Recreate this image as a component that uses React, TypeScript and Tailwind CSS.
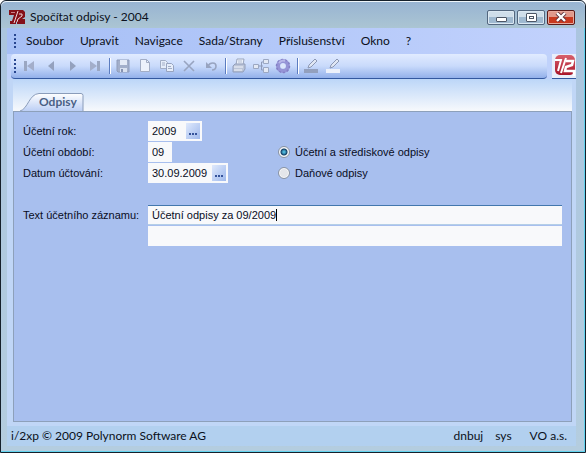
import type { ReactNode } from "react";

const menu = ["Soubor", "Upravit", "Navigace", "Sada/Strany", "Příslušenství", "Okno", "?"];

const toolGroups: { label: string; icon: ReactNode }[][] = [
  [
    { label: "První", icon: <><path d="M3 3h3v10H3z" fill="#9ba7c2" /><path d="M13 3v10L6 8z" fill="#a3aeca" /></> },
    { label: "Předchozí", icon: <path d="M11 3v10L5 8z" fill="#94a1be" /> },
    { label: "Další", icon: <path d="M5 3v10l6-5z" fill="#94a1be" /> },
    { label: "Poslední", icon: <><path d="M10 3h3v10h-3z" fill="#9ba7c2" /><path d="M3 3v10l7-5z" fill="#a3aeca" /></> },
  ],
  [
    {
      label: "Uložit",
      icon: (
        <>
          <path d="M2 2h12v12H3l-1-1z" fill="#a3afca" stroke="#8f9cba" />
          <path d="M5 2h7v5H5z" fill="#e4eaf6" />
          <path d="M5 10h7v4H5z" fill="#d9e1f0" />
          <path d="M6 11h2v3H6z" fill="#8592b2" />
        </>
      ),
    },
    { label: "Nový", icon: <><path d="M3.5 1.5h6l3 3v9h-9z" fill="#edf2fc" stroke="#a2adc5" /><path d="M9.5 1.5v3h3" fill="none" stroke="#a2adc5" /></> },
    {
      label: "Kopírovat",
      icon: (
        <>
          <path d="M1.500 2.500h5l2 2v6h-7z" fill="#e6edfa" stroke="#a2adc5" />
          <path d="M7.500 5.500h5l2 2v6h-7z" fill="#e6edfa" stroke="#97a3bf" />
          <path d="M3 5h3M3 7h3M9 8.500h3M9 10.500h4" stroke="#a2adc5" />
        </>
      ),
    },
    { label: "Smazat", icon: <path d="M3 3l10 10M13 3L3 13" stroke="#98a4c0" strokeWidth="1.600" /> },
    { label: "Zpět", icon: <><path d="M5 8c2-4 8-4 8 0 0 3-2 4-4 4" fill="none" stroke="#98a4c0" strokeWidth="1.600" /><path d="M3 4v6h6z" fill="#98a4c0" /></> },
  ],
  [
    {
      label: "Tisk",
      icon: (
        <>
          <path d="M5 7l1-6h7l-1 6z" fill="#edf2fb" stroke="#9ba6bd" />
          <path d="M2 8l2-2h10v5l-2 3H2z" fill="#bcc5d8" stroke="#929eb9" />
          <path d="M3 9h9M3 12h8" stroke="#f2f5fb" />
          <path d="M7 3h4M7 5h4" stroke="#b3bdd1" />
        </>
      ),
    },
    {
      label: "Struktura",
      icon: (
        <>
          <path d="M6 8h4M8.500 4v8M8.500 4H10M8.500 12H10" fill="none" stroke="#8f9bb9" />
          <path d="M.5 6.500h5v4h-5zM10.500 1.500h5v4h-5zM10.500 9.500h5v5h-5z" fill="#e3e9f5" stroke="#9ca8c2" />
        </>
      ),
    },
    {
      label: "Nastavení",
      icon: (
        <>
          <circle cx="8" cy="8" r="5" fill="none" stroke="#9694d6" strokeWidth="4" />
          <circle cx="8" cy="8" r="6.500" fill="none" stroke="#8481c6" strokeWidth="1.500" strokeDasharray="2 2" />
          <path d="M4 5c1-2 4-3 6-2" fill="none" stroke="#b9b8e9" strokeWidth="2" />
          <circle cx="8" cy="8" r="2.500" fill="#dde6fb" />
        </>
      ),
    },
  ],
  [
    { label: "Barva pera", icon: <><path d="M1 11h14v4H1z" fill="#93a0bd" /><path d="M5 10l1-3 6-6 2 2-6 6z" fill="#e0e7f4" stroke="#8c98b4" /></> },
    { label: "Zvýraznění", icon: <><path d="M1 11h14v4H1z" fill="#edf1fa" /><path d="M5 10l1-3 6-6 2 2-6 6z" fill="#e0e7f4" stroke="#8c98b4" /></> },
  ],
];

function Grip() {
  return (
    <span className="flex flex-col gap-[2px]">
      {[0, 1, 2, 3].map((i) => (
        <span key={i} className="size-[2px] bg-[#27458f]" />
      ))}
    </span>
  );
}

function TitleLogo() {
  return (
    <svg viewBox="0 0 16 16" className="size-4 shrink-0" aria-hidden="true">
      <path d="M0 1h14l2 2v5l-3 2h3v5H8v-2H7v2H1v-3h2l2-6H0z" fill="#841019" />
      <path d="M9 2L5 14M10 5h3v2l-4 3-1 3" fill="none" stroke="#f0d3d8" />
      <path d="M2 3.500h4" stroke="#c98088" />
    </svg>
  );
}

function BrandLogo() {
  return (
    <svg viewBox="0 0 24 24" className="size-6" aria-hidden="true">
      <defs>
        <linearGradient id="brand" x2="0" y2="1">
          <stop stopColor="#d8606c" />
          <stop offset="1" stopColor="#a9152a" />
        </linearGradient>
      </defs>
      <rect width="24" height="24" fill="#e9effb" />
      <rect x="3" y="1" width="20" height="20" rx="5" fill="url(#brand)" />
      <path d="M3 6h6L6 17M14 4L9 19" fill="none" stroke="#fff" strokeWidth="2" />
      <path d="M14 7h7l-1 4-6 2-1 4h9v5" fill="none" stroke="#fff" strokeWidth="2.500" />
    </svg>
  );
}

function PickButton({ label }: { label: string }) {
  return (
    <button
      type="button"
      aria-label={label}
      className="flex h-4 w-[14px] shrink-0 items-end justify-center gap-px bg-linear-to-br from-[#dfe9fc] to-[#9fb9ec] pb-1"
    >
      <span className="size-[2px] bg-[#35539a]" />
      <span className="size-[2px] bg-[#35539a]" />
      <span className="size-[2px] bg-[#35539a]" />
    </button>
  );
}

const radioClass =
  "size-3 shrink-0 appearance-none rounded-full border border-[#8792a3] bg-[#e4e6ea] shadow-[inset_0_0_0_1px_#fafafa] checked:bg-[radial-gradient(circle,#4cb4d8_0_1px,#123f66_3px,#e8edf2_4px)]";

export default function App() {
  return (
    <div className="flex min-h-screen flex-col rounded-t-md border border-[#15202b] bg-[#bbd0ee] font-[Lato,'Open_Sans',sans-serif] text-[12px] leading-4 text-[#0b1020]">
      <header className="flex h-[27px] items-center justify-between rounded-t-md border-t border-[#eef5fa] bg-linear-to-b from-[#98b4d2] to-[#abc5d3] pr-[10px] pl-2">
        <div className="flex items-center gap-[5px] pt-1">
          <TitleLogo />
          <h1>Spočítat odpisy - 2004</h1>
        </div>
        <div className="flex gap-[2px] pt-1">
          <button type="button" aria-label="Minimalizovat" className="flex h-[15px] w-7 items-center justify-center rounded-xs border border-[#53677f] bg-linear-to-b from-[#cfdeea] from-50% to-[#9fb9d0] to-50% shadow-[inset_0_0_0_1px_#dbe8f2]">
            <span className="mt-1 h-[5px] w-[11px] rounded-[1px] border border-[#4c5665] bg-white" />
          </button>
          <button type="button" aria-label="Maximalizovat" className="flex h-[15px] w-7 items-center justify-center rounded-xs border border-[#53677f] bg-linear-to-b from-[#cfdeea] from-50% to-[#9fb9d0] to-50% shadow-[inset_0_0_0_1px_#dbe8f2]">
            <span className="flex h-[9px] w-[11px] items-center justify-center rounded-[1px] border border-[#4c5665] bg-white">
              <span className="h-[3px] w-[5px] border border-[#4c5665]" />
            </span>
          </button>
          <button type="button" aria-label="Zavřít" className="flex h-[15px] w-7 items-center justify-center rounded-xs border border-[#5c1a18] bg-linear-to-b from-[#e0998b] from-50% to-[#c8391f] to-50% shadow-[inset_0_0_0_1px_#e7a99c]">
            <svg viewBox="0 0 12 10" className="h-[10px] w-3" aria-hidden="true">
              <path d="M2 1l8 8M10 1L2 9" stroke="#5d3038" strokeWidth="4" />
              <path d="M2 1l8 8M10 1L2 9" stroke="#fff" strokeWidth="2.400" />
            </svg>
          </button>
        </div>
      </header>

      <div className="flex flex-1 flex-col border-r border-b border-[#62d3ee] bg-linear-to-b from-[#abc5df] to-[#b4cddf] pr-2 pb-[5px] pl-[6px]">
        <nav className="flex h-[26px] items-center bg-linear-to-r from-[#a6bff5] to-[#c2d2fd] pl-[7px]">
          <Grip />
          <div className="flex gap-4 pl-[10px]">
            {menu.map((item) => (
              <button key={item} type="button">{item}</button>
            ))}
          </div>
        </nav>

        <div className="flex gap-[5px] bg-[#c0d2fb] pl-1">
          <div className="flex h-[25px] flex-1 items-center rounded-sm border-b border-[#33589f] bg-linear-to-b from-[#e1ebff] via-[#c9dafb] to-[#93b0ea] pl-[3px]">
            <Grip />
            <div className="flex pl-[2px]">
              {toolGroups.map((group, g) => (
                <div key={g} className="flex items-center">
                  {g > 0 && <span className="mr-px ml-[3px] h-4 w-[2px] border-r border-l border-r-white border-l-[#5b7cc0]" />}
                  {group.map((tool) => (
                    <button key={tool.label} type="button" aria-label={tool.label} className="flex w-[22px] justify-center">
                      <svg viewBox="0 0 16 16" className="size-4" aria-hidden="true">{tool.icon}</svg>
                    </button>
                  ))}
                </div>
              ))}
            </div>
          </div>
          <div className="h-[25px] border-b border-[#33589f]">
            <BrandLogo />
          </div>
        </div>

        <main className="flex flex-1 flex-col bg-[#c0d6f6] px-1 pb-1 pl-[6px]">
          <div className="flex h-8 items-end bg-linear-to-b from-[#bcd6f8] to-[#f7f9fc]" role="tablist">
            <button type="button" role="tab" aria-selected="true" className="relative h-[18px] w-[71px] pl-[26px] text-left text-[12px] font-bold text-[#4a5f85]">
              <svg viewBox="0 0 71 18" preserveAspectRatio="none" className="absolute inset-0 size-full" aria-hidden="true">
                <defs>
                  <linearGradient id="tab" x2="0" y2="1">
                    <stop stopColor="#ffffff" />
                    <stop offset="1" stopColor="#bccff5" />
                  </linearGradient>
                </defs>
                <path d="M7 18C15 16 16 1 26 .5h42q2 0 2 2V18" fill="url(#tab)" stroke="#8a9cba" />
              </svg>
              <span className="relative">Odpisy</span>
            </button>
          </div>

          <form className="flex-1 border border-[#8da0ba] bg-[#a8bfee] px-[9px] pt-[9px] font-['Liberation_Sans',Arial,sans-serif] text-[11px] text-[#080d24]">
            <div className="grid grid-cols-[125px_130px_1fr] items-center gap-y-px">
              <label htmlFor="year">Účetní rok:</label>
              <div className="flex h-5 w-[54px] items-center bg-[#f8f9fb] pr-[2px]">
                <input id="year" defaultValue="2009" className="w-full min-w-0 pl-1 outline-none" />
                <PickButton label="Vybrat rok" />
              </div>
              <span />

              <label htmlFor="period">Účetní období:</label>
              <input id="period" defaultValue="09" className="h-5 w-6 bg-[#f8f9fb] pl-1 outline-none" />
              <label className="flex items-center gap-[5px]">
                <input type="radio" name="kind" defaultChecked className={radioClass} />
                Účetní a střediskové odpisy
              </label>

              <label htmlFor="date">Datum účtování:</label>
              <div className="flex h-5 w-20 items-center bg-[#f8f9fb] pr-[2px]">
                <input id="date" defaultValue="30.09.2009" className="w-full min-w-0 pl-1 outline-none" />
                <PickButton label="Vybrat datum" />
              </div>
              <label className="flex items-center gap-[5px]">
                <input type="radio" name="kind" className={radioClass} />
                Daňové odpisy
              </label>
            </div>

            <div className="mt-[22px] grid grid-cols-[125px_1fr] items-center gap-y-px">
              <label htmlFor="note" className="whitespace-nowrap">Text účetního záznamu:</label>
              <div className="relative flex">
                <input id="note" defaultValue="Účetní odpisy za 09/2009" className="h-5 w-full border-t border-b border-t-[#4377ad] border-b-[#b5cfe7] bg-[#f8f9fb] pl-1 outline-none" />
                <span className="absolute top-1 left-[128px] h-3 w-px bg-black" />
              </div>
              <input aria-label="Text účetního záznamu, druhý řádek" className="col-start-2 h-5 w-full bg-[#f8f9fb] pl-1 outline-none" />
            </div>
          </form>
        </main>

        <footer className="flex h-5 items-center bg-[#b2d0ef] pr-[9px] pl-1">
          <span className="flex-1">i/2xp © 2009 Polynorm Software AG</span>
          <span className="mr-3">dnbuj</span>
          <span className="mr-[18px]">sys</span>
          <span>VO a.s.</span>
        </footer>
      </div>
    </div>
  );
}
